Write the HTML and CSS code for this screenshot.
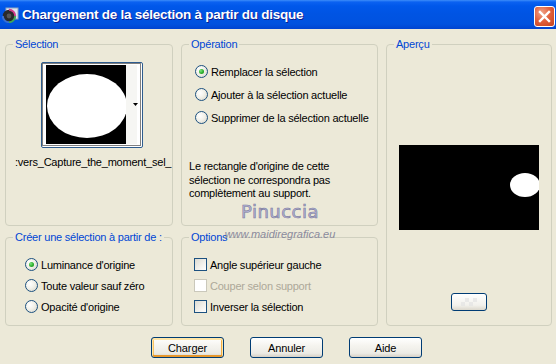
FILE: index.html
```html
<!DOCTYPE html>
<html lang="fr">
<head>
<meta charset="utf-8">
<title>Chargement de la sélection à partir du disque</title>
<link rel="stylesheet" href="styles.css">
</head>
<body>
<div class="window">
  <div class="titlebar">
    <svg class="app-icon" width="17" height="16" viewBox="0 0 17 16">
      <rect x="4" y="1" width="12" height="11" fill="#DDE6F2" stroke="#8EA3C0"/>
      <circle cx="7" cy="9" r="6.2" fill="#2A2A2A"/>
      <path d="M7 2.8 A6.2 6.2 0 0 1 13.2 9" stroke="#D23C8C" stroke-width="2" fill="none"/>
      <path d="M13.2 9 A6.2 6.2 0 0 1 7 15.2" stroke="#3FA65A" stroke-width="2" fill="none"/>
      <path d="M7 15.2 A6.2 6.2 0 0 1 0.8 9" stroke="#3B6FD0" stroke-width="2" fill="none"/>
      <circle cx="7" cy="9" r="2.4" fill="#555"/>
    </svg>
    <span class="title">Chargement de la sélection à partir du disque</span>
    <div class="close">
      <svg width="21" height="21" viewBox="0 0 21 21">
        <path d="M6 6 L15 15 M15 6 L6 15" stroke="#fff" stroke-width="2.4" stroke-linecap="square"/>
      </svg>
    </div>
  </div>

  <div class="content">
    <div class="groups">
      <fieldset class="group g-sel">
        <legend>Sélection</legend>
        <div class="thumb">
          <svg width="100" height="84" viewBox="0 0 100 84">
            <defs><clipPath id="clipimg"><rect x="4" y="2" width="80" height="79"/></clipPath></defs>
            <rect x="4" y="2" width="80" height="79" fill="#000"/>
            <ellipse cx="45" cy="43" rx="40" ry="32" fill="#fff" clip-path="url(#clipimg)"/>
            <rect x="84" y="2" width="11" height="79" fill="#F6F6F3"/>
            <path d="M91 40 L96 40 L93.5 43 Z" fill="#000"/>
            <rect x="0.5" y="0.5" width="98" height="82" fill="none" stroke="#000" stroke-dasharray="1 1"/>
          </svg>
        </div>
        <div class="filename">:vers_Capture_the_moment_sel_</div>
      </fieldset>

      <fieldset class="group g-op">
        <legend>Opération</legend>
        <div class="opt-list">
          <div class="opt-row"><span class="radio checked"></span><span>Remplacer la sélection</span></div>
          <div class="opt-row"><span class="radio"></span><span>Ajouter à la sélection actuelle</span></div>
          <div class="opt-row"><span class="radio"></span><span>Supprimer de la sélection actuelle</span></div>
        </div>
        <p class="note">Le rectangle d'origine de cette<br>sélection ne correspondra pas<br>complètement au support.</p>
      </fieldset>

      <fieldset class="group g-prev">
        <legend>Aperçu</legend>
        <div class="preview">
          <svg width="140" height="85" viewBox="0 0 140 85">
            <rect width="140" height="85" fill="#000"/>
            <ellipse cx="126" cy="40" rx="15" ry="12" fill="#fff"/>
          </svg>
        </div>
        <div class="small-btn"><span class="checker"></span></div>
      </fieldset>

      <fieldset class="group g-create">
        <legend>Créer une sélection à partir de :</legend>
        <div class="opt-list small">
          <div class="opt-row"><span class="radio checked"></span><span>Luminance d'origine</span></div>
          <div class="opt-row"><span class="radio"></span><span>Toute valeur sauf zéro</span></div>
          <div class="opt-row"><span class="radio"></span><span>Opacité d'origine</span></div>
        </div>
      </fieldset>

      <fieldset class="group g-opt">
        <legend>Options</legend>
        <div class="opt-list small">
          <div class="opt-row"><span class="check"></span><span>Angle supérieur gauche</span></div>
          <div class="opt-row disabled"><span class="check"></span><span>Couper selon support</span></div>
          <div class="opt-row"><span class="check"></span><span>Inverser la sélection</span></div>
        </div>
      </fieldset>
    </div>

    <div class="buttons">
      <button class="btn default">Charger</button>
      <button class="btn">Annuler</button>
      <button class="btn">Aide</button>
    </div>
  </div>

  <div class="watermark">
    <div class="wm-name">Pinuccia</div>
    <div class="wm-url">www.maidiregrafica.eu</div>
  </div>
</div>
</body>
</html>
```

FILE: styles.css
```css
html, body {
  margin: 0;
  padding: 0;
}
body {
  width: 556px;
  height: 364px;
  overflow: hidden;
  background: #ECE9D8;
  font-family: "Liberation Sans", Arial, sans-serif;
  font-size: 11px;
  letter-spacing: -0.22px;
  color: #000;
}
.window {
  position: relative;
  width: 556px;
  height: 364px;
  background: #ECE9D8;
}
.titlebar {
  height: 29px;
  display: flex;
  align-items: center;
  padding-left: 2px;
  background: linear-gradient(#3D8DF9 0px, #0B62F1 2px, #0058EA 6px, #0054E3 14px, #0052DF 24px, #0044D0 29px);
  box-sizing: border-box;
}
.app-icon {
  flex: none;
  margin-top: 1px;
}
.title {
  margin-left: 3px;
  font-family: "Liberation Sans", Arial, sans-serif;
  font-weight: bold;
  font-size: 13.5px;
  color: #fff;
  text-shadow: 1px 1px 0 #0F1F8F;
  letter-spacing: -0.25px;
}
.close {
  margin-left: auto;
  margin-right: 1px;
  width: 21px;
  height: 21px;
  box-sizing: border-box;
  border: 1px solid #fff;
  border-radius: 3px;
  background: radial-gradient(circle at 35% 30%, #F0A48A 0%, #E2623E 45%, #C4421C 100%);
  display: flex;
  align-items: center;
  justify-content: center;
  margin-top: 3px;
}
.close svg {
  margin: -1px;
}

.groups {
  display: grid;
  grid-template-columns: 168px 197px 166px;
  grid-template-rows: 188px 95px;
  column-gap: 8px;
  row-gap: 5px;
  padding: 9px 0 0 5px;
}
.group {
  margin: 0;
  padding: 0;
  min-width: 0;
  border: 1px solid #D0D0BF;
  border-radius: 4px;
  box-sizing: border-box;
}
.group legend {
  margin-left: 7px;
  padding: 0 2px;
  color: #0046D5;
  font-size: 11px;
  line-height: 13px;
}
.g-sel { grid-column: 1; grid-row: 1; }
.g-op { grid-column: 2; grid-row: 1; }
.g-prev { grid-column: 3; grid-row: 1 / 3; }
.g-create { grid-column: 1; grid-row: 2; }
.g-opt { grid-column: 2; grid-row: 2; }

.thumb {
  width: 100px;
  height: 84px;
  margin: 11px 0 0 35px;
  border: 1px solid #2E5C8E;
  border-radius: 2px;
  background: #fff;
}
.thumb svg { display: block; }
.filename {
  margin-top: 8px;
  padding-left: 9px;
  white-space: nowrap;
  overflow: hidden;
  line-height: 13px;
  font-size: 11px;
}

.opt-list {
  padding: 9px 0 0 13px;
}
.opt-list .opt-row {
  height: 23px;
  display: flex;
  align-items: center;
  gap: 3px;
}
.opt-list.small {
  padding: 10px 0 0 19px;
}
.opt-list.small .opt-row {
  height: 21px;
}
.g-opt .opt-list.small {
  padding-left: 12px;
}
.opt-row.disabled {
  color: #ACA899;
}

.radio {
  flex: none;
  width: 13px;
  height: 13px;
  box-sizing: border-box;
  border-radius: 50%;
  border: 1px solid #1C5180;
  background: radial-gradient(circle at 35% 35%, #FFFFFF 0%, #F2F1EA 45%, #D4D2C6 100%);
  display: flex;
  align-items: center;
  justify-content: center;
}
.radio.checked::after {
  content: "";
  width: 5px;
  height: 5px;
  border-radius: 50%;
  background: radial-gradient(circle at 35% 35%, #7FE47F 0%, #2AAE2A 55%, #1C8A1C 100%);
}
.check {
  flex: none;
  width: 13px;
  height: 13px;
  box-sizing: border-box;
  border: 1px solid #1C5180;
  background: linear-gradient(135deg, #DCDBD3 0%, #F1F0EB 55%, #FFFFFF 100%);
}
.opt-row.disabled .check {
  border-color: #CAC8BB;
  background: #fff;
}

.note {
  margin: 31px 0 0 7px;
  line-height: 13.5px;
}

.preview {
  margin: 94px auto 0;
  width: 140px;
  height: 85px;
}
.preview svg { display: block; }
.small-btn {
  margin: 63px auto 0;
  width: 36px;
  height: 18px;
  box-sizing: border-box;
  border: 1px solid #003C74;
  border-radius: 3px;
  background: linear-gradient(#FFFFFF, #F2F1EC 70%, #DCD8CD);
  display: flex;
  align-items: center;
  justify-content: center;
}
.checker {
  width: 16px;
  height: 8px;
  background:
    linear-gradient(45deg, #E4E4E4 25%, transparent 25%, transparent 75%, #E4E4E4 75%),
    linear-gradient(45deg, #E4E4E4 25%, transparent 25%, transparent 75%, #E4E4E4 75%);
  background-size: 8px 8px;
  background-position: 0 0, 4px 4px;
  opacity: 0.7;
}

.buttons {
  display: flex;
  gap: 26px;
  padding-left: 151px;
  margin-top: 11px;
}
.btn {
  width: 73px;
  height: 21px;
  padding: 0;
  box-sizing: border-box;
  border: 1px solid #003C74;
  border-radius: 3px;
  background: linear-gradient(#FFFFFF 0%, #F5F4EF 40%, #ECEBE5 80%, #D6D0C5 100%);
  font-family: "Liberation Sans", Arial, sans-serif;
  font-size: 11px;
  letter-spacing: -0.1px;
  color: #000;
}
.btn.default {
  box-shadow: inset 0 1px 0 1px #FFE6A8, inset 0 -1px 0 1px #E5972D, inset 1px 0 0 1px #F9C364, inset -1px 0 0 1px #F2AE46;
}

.watermark {
  position: absolute;
  left: 200px;
  top: 201px;
  width: 160px;
  text-align: center;
  pointer-events: none;
}
.wm-name {
  font-family: "DejaVu Sans", sans-serif;
  font-size: 18px;
  line-height: 22px;
  letter-spacing: 0.5px;
  color: #B4B4D4;
  -webkit-text-stroke: 0.6px #7A7A9E;
}
.wm-url {
  margin-top: 5px;
  font-family: "Liberation Sans", Arial, sans-serif;
  font-style: italic;
  font-size: 11px;
  line-height: 12px;
  color: #8A8A9C;
  letter-spacing: 0;
}
```
